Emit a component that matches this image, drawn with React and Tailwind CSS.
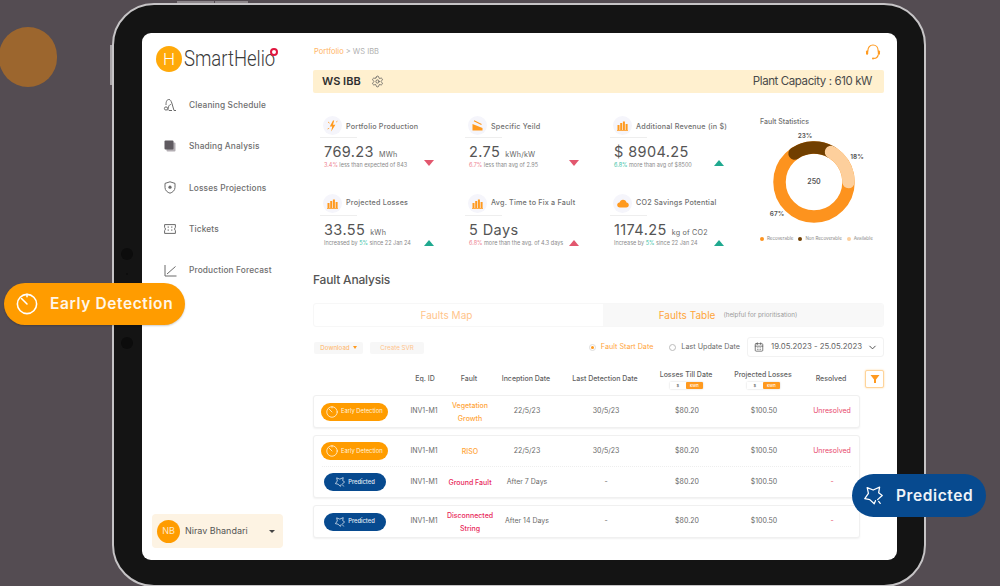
import { CalendarDays, ChevronDown, Settings } from 'lucide-react';

const navItems = [
  { name: 'Cleaning Schedule', icon: VacuumIcon },
  { name: 'Shading Analysis', icon: LayersIcon },
  { name: 'Losses Projections', icon: ShieldIcon },
  { name: 'Tickets', icon: TicketIcon },
  { name: 'Production Forecast', icon: ForecastIcon }
];

const kpis = [
  { title: 'Portfolio Production', icon: BoltIcon, value: '769.23', unit: 'MWh', pct: '3.4%', note: 'less than expected of 843', pctColor: 'text-[#ee7f90]', up: false, bad: true, top: true },
  { title: 'Specific Yeild', icon: SlopeIcon, value: '2.75', unit: 'kWh/kW', pct: '6.7%', note: 'less than avg of 2.95', pctColor: 'text-[#ee7f90]', up: false, bad: true, top: true },
  { title: 'Additional Revenue (in $)', icon: BarsIcon, value: '$ 8904.25', unit: '', pct: '6.8%', note: 'more than avg of $8500', pctColor: 'text-[#3cc3a8]', up: true, bad: false, top: true },
  { title: 'Projected Losses', icon: BarsIcon, value: '33.55', unit: 'kWh', before: 'Increased by', pct: '5%', note: 'since 22 Jan 24', pctColor: 'text-[#3cc3a8]', up: true, bad: false },
  { title: 'Avg. Time to Fix a Fault', icon: BarsIcon, value: '5 Days', unit: '', pct: '6.8%', note: 'more than the avg. of 4.3 days', pctColor: 'text-[#ee7f90]', up: true, bad: true },
  { title: 'CO2 Savings Potential', icon: CloudIcon, value: '1174.25', unit: 'kg of CO2', before: 'Increase by', pct: '5%', note: 'since 22 Jan 24', pctColor: 'text-[#3cc3a8]', up: true, bad: false }
];

const tableCols = 'grid grid-cols-[89px_42px_50px_64px_94px_68px_86px_50px] items-center text-center';

function VacuumIcon() {
  return (
    <svg width="14" height="14" viewBox="0 0 14 14" fill="none" stroke="#6b6b6b" strokeWidth="1">
      <path d="M3 7 C3 3 4 1.5 6 1.5 C7.5 1.5 8 3 8.8 5 L11 12.5 H13" />
      <path d="M5 12.5 C5 9 6 6.5 8 6.5" />
      <circle cx="3" cy="10.5" r="1.6" />
      <path d="M6 12.5 H9" />
    </svg>
  );
}

function LayersIcon() {
  return (
    <svg width="12" height="12" viewBox="0 0 12 12">
      <rect x="2.5" y="2.5" width="9" height="9" rx="1" fill="#b3aeb3" />
      <rect x="0.5" y="0.5" width="9" height="9" rx="1" fill="#5f5a60" />
    </svg>
  );
}

function ShieldIcon() {
  return (
    <svg width="12" height="13" viewBox="0 0 12 13" fill="none" stroke="#6b6b6b" strokeWidth="1">
      <path d="M6 0.8 L11 2.4 V6.5 C11 9.5 8.5 11.4 6 12.2 C3.5 11.4 1 9.5 1 6.5 V2.4 Z" />
      <circle cx="6" cy="6.2" r="1.6" fill="#6b6b6b" stroke="none" />
    </svg>
  );
}

function TicketIcon() {
  return (
    <svg width="12" height="10" viewBox="0 0 12 10" fill="none" stroke="#6b6b6b" strokeWidth="1">
      <path d="M0.6 0.6 H11.4 V3.4 C10.4 3.8 10.4 6.2 11.4 6.6 V9.4 H0.6 V6.6 C1.6 6.2 1.6 3.8 0.6 3.4 Z" />
      <path d="M4.2 2.4 V3.8 M4.2 5.4 V6.8 M7.8 2.4 V3.8 M7.8 5.4 V6.8" />
    </svg>
  );
}

function ForecastIcon() {
  return (
    <svg width="13" height="13" viewBox="0 0 13 13" fill="none" stroke="#6b6b6b" strokeWidth="1">
      <path d="M1 1 V12 H12.5" />
      <path d="M3 10 L11.5 2.5" />
    </svg>
  );
}

function BoltIcon() {
  return (
    <svg width="11" height="12" viewBox="0 0 11 12" fill="#ff9a1f">
      <path d="M6 0.5 L2.8 6.6 H5.2 L4.2 11.5 L8.4 4.8 H6 L7.2 0.5 Z" />
      <path d="M1 2 L2.6 3.2 M0.6 9 L2.2 8.2 M9.2 2 L10.4 1.2" stroke="#ff9a1f" strokeWidth="0.8" />
    </svg>
  );
}

function SlopeIcon() {
  return (
    <svg width="11" height="11" viewBox="0 0 11 11" fill="#ff9a1f">
      <path d="M0.5 4 L10.5 8 V10.5 H0.5 Z" />
      <path d="M2 0.8 L9.5 4.5" stroke="#ff9a1f" strokeWidth="1.2" />
    </svg>
  );
}

function BarsIcon() {
  return (
    <svg width="11" height="10" viewBox="0 0 11 10" fill="#ff9a1f">
      <rect x="0.5" y="4" width="2" height="5" />
      <rect x="3.2" y="2" width="2" height="7" />
      <rect x="5.9" y="0.5" width="2" height="8.5" />
      <rect x="8.6" y="3" width="2" height="6" />
      <rect x="0" y="9.2" width="11" height="0.8" />
    </svg>
  );
}

function CloudIcon() {
  return (
    <svg width="12" height="9" viewBox="0 0 12 9" fill="#ff9a1f">
      <path d="M3 8.5 C1.2 8.5 0.2 7.3 0.2 6 C0.2 4.6 1.3 3.7 2.5 3.6 C3 1.8 4.4 0.7 6 0.7 C7.9 0.7 9.2 2 9.5 3.6 C10.8 3.8 11.8 4.7 11.8 6 C11.8 7.4 10.8 8.5 9.2 8.5 Z" />
    </svg>
  );
}

function SupportIcon() {
  return (
    <svg width="16" height="16" viewBox="0 0 16 16" fill="none" stroke="#ff9a1f" strokeWidth="1.2" strokeLinecap="round">
      <path d="M2.8 7 C2.8 3.4 5 1 8 1 C11 1 13.2 3.4 13.2 7" />
      <rect x="1" y="6.4" width="2.2" height="4.4" rx="1.1" fill="#ff9a1f" stroke="none" />
      <rect x="12.8" y="6.4" width="2.2" height="4.4" rx="1.1" fill="#ff9a1f" stroke="none" />
      <path d="M13.2 10.8 C12.8 13 11 14.4 8.8 14.4" />
      <circle cx="8" cy="14.4" r="1" fill="#ff9a1f" stroke="none" />
    </svg>
  );
}

function TimerIcon({ size, stroke = 1.4 }) {
  return (
    <svg width={size} height={size} viewBox="0 0 24 24" fill="none" stroke="white" strokeWidth={stroke} strokeLinecap="round">
      <circle cx="12" cy="12" r="10.5" />
      <path d="M12 12 L6 6" />
      <path d="M12 1.5 V4" />
    </svg>
  );
}

function StarIcon({ size, stroke = 1.6 }) {
  return (
    <svg width={size} height={size} viewBox="0 0 24 24" fill="none" stroke="white" strokeWidth={stroke} strokeLinejoin="round" strokeLinecap="round">
      <path d="M17.2 17.2 L23 12 L18.5 8.6 L19.7 1.5 L11.6 5.1 L4 2 L5.6 9.4 L1 16 L7.3 17.2 L12.9 22.5 L14.5 18.5" />
      <path d="M18.5 19.5 L20.5 22" />
    </svg>
  );
}

function Triangle({ up, bad }) {
  return (
    <svg width="10" height="6" viewBox="0 0 10 6" fill={bad ? '#e2576e' : '#1fa98f'}>
      <path d={up ? 'M5 0 L10 6 H0 Z' : 'M0 0 H10 L5 6 Z'} />
    </svg>
  );
}

function KpiCard({ item }) {
  const Icon = item.icon;
  return (
    <div className="h-[78px]">
      <div className="flex items-center gap-[4px] pl-[3px] h-[19px]">
        <div className="w-[19px] h-[19px] rounded-full bg-[#f5f5fb] flex items-center justify-center">
          <Icon />
        </div>
        <span className={`text-[7.2px] font-medium text-[#6f6f6f] tracking-[0.2px] whitespace-nowrap ${item.top ? 'pt-[3px]' : ''}`}>{item.title}</span>
      </div>
      <div className="w-[37px] border-t border-[#eeeeee] mt-[2px]" />
      <div className="flex items-end w-[114px] justify-between pl-[4px] mt-[4px]">
        <div>
          <div className="flex items-baseline gap-[5px] h-[20px]">
            <span className="text-[14.5px] leading-[20px] text-[#555555] tracking-[0.4px] whitespace-nowrap">{item.value}</span>
            {item.unit && <span className="text-[7.2px] text-[#666666] tracking-[0.2px] whitespace-nowrap">{item.unit}</span>}
          </div>
          <p className="text-[5.5px] leading-[7px] text-[#8a8a8a] whitespace-nowrap">
            {item.before && `${item.before} `}
            <span className={item.pctColor}>{item.pct}</span> {item.note}
          </p>
        </div>
        <div className={item.top ? 'mb-[3px]' : 'mb-[1px]'}>
          <Triangle up={item.up} bad={item.bad} />
        </div>
      </div>
    </div>
  );
}

function Donut() {
  return (
    <svg width="110" height="100" viewBox="0 0 110 100" className="block">
      <circle cx="55" cy="50" r="34.5" fill="none" stroke="#fd931e" strokeWidth="12.5" />
      <path d="M35.6 21.5 A34.5 34.5 0 0 1 72 20" fill="none" stroke="#713f00" strokeWidth="12.5" strokeLinecap="round" />
      <path d="M72 20 A34.5 34.5 0 0 1 89.5 50" fill="none" stroke="#fdcf9c" strokeWidth="12.5" strokeLinecap="round" />
      <text x="55" y="51.5" textAnchor="middle" fontSize="7" fontWeight="600" fill="#555555">250</text>
      <text x="46" y="6" textAnchor="middle" fontSize="6.5" fontWeight="600" fill="#555555">23%</text>
      <text x="98" y="27" textAnchor="middle" fontSize="6.5" fontWeight="600" fill="#555555">18%</text>
      <text x="18" y="84" textAnchor="middle" fontSize="6.5" fontWeight="600" fill="#555555">67%</text>
    </svg>
  );
}

function LegendDot({ color, label }) {
  return (
    <div className="flex items-center gap-[3px]">
      <span className={`w-[4px] h-[4px] rounded-full ${color}`} />
      <span className="text-[4.5px] text-[#888888] whitespace-nowrap">{label}</span>
    </div>
  );
}

function UnitToggle() {
  return (
    <div className="flex justify-center mt-[2px]">
      <div className="flex h-[7px] w-[33px] rounded-[1px] shadow-[0_0_2px_rgba(0,0,0,0.2)] text-[4px] leading-[7px]">
        <span className="flex-1 bg-white text-[#666666]">$</span>
        <span className="flex-1 bg-[#ff9a1f] text-white rounded-[1px]">kWh</span>
      </div>
    </div>
  );
}

function EarlyBadge() {
  return (
    <div className="ml-[7px] w-[67px] h-[18px] rounded-full bg-[#ff9c00] flex items-center gap-[3px] pl-[5px]">
      <TimerIcon size={12} />
      <span className="text-[5.8px] text-[#fff3df] whitespace-nowrap">Early Detection</span>
    </div>
  );
}

function PredictedBadge() {
  return (
    <div className="ml-[10px] w-[62px] h-[18px] rounded-full bg-[#074a8f] flex items-center justify-center gap-[3px]">
      <StarIcon size={10} />
      <span className="text-[5.8px] font-medium text-[#e4edf6]">Predicted</span>
    </div>
  );
}

function Row({ badge, fault, faultColor, inception, last, resolved, h = 'h-[31px]' }) {
  return (
    <div className={`${tableCols} ${h} text-[7px] text-[#6a6a6a]`}>
      <div>{badge === 'early' ? <EarlyBadge /> : <PredictedBadge />}</div>
      <div className="text-[7px]">INV1-M1</div>
      <div className={`font-medium leading-[13px] text-[7px] ${faultColor}`}>{fault}</div>
      <div>{inception}</div>
      <div>{last}</div>
      <div>$80.20</div>
      <div>$100.50</div>
      <div className={resolved === '-' ? 'text-[#e8526f]' : 'text-[#e8466a]'}>{resolved}</div>
    </div>
  );
}

const cardClass = 'w-[547px] rounded-[3px] border border-[#f0f0f0] bg-white shadow-[0_1px_2px_rgba(0,0,0,0.06)]';

function Sidebar() {
  return (
    <aside className="w-[171px] h-full flex flex-col pl-[10px] pr-[30px] pb-[12px]">
      <div className="flex items-center h-[26px] mt-[13px] ml-[4px] relative">
        <div className="shrink-0 w-[26px] h-[26px] rounded-full bg-[#ffa90a] flex items-center justify-center text-[17px] font-light leading-none text-white font-['Roboto',sans-serif]">H</div>
        <span className="ml-[2px] text-[21.5px] font-light text-[#3a3a3a] leading-none font-['Roboto',sans-serif] whitespace-nowrap scale-x-[0.86] origin-left">SmartHelio</span>
        <span className="absolute left-[114px] top-[2px] w-[8px] h-[8px] rounded-full border-[2px] border-[#e0173f] bg-white" />
      </div>
      <nav className="mt-[24px] flex flex-col gap-[23.4px]">
        {navItems.map((item) => {
          const Icon = item.icon;
          return (
            <div key={item.name} className="flex items-center h-[18px] pl-[10px]">
              <div className="w-[16px] flex justify-center"><Icon /></div>
              <span className="ml-[11px] text-[8.3px] font-medium text-[#6e6e6e] tracking-[0.15px] whitespace-nowrap">{item.name}</span>
            </div>
          );
        })}
      </nav>
      <div className="mt-auto h-[34px] rounded-[4px] bg-[#fdf3e3] flex items-center pl-[5px] pr-[8px]">
        <div className="w-[23px] h-[23px] rounded-full bg-[#ff9c00] text-[#ffe9c8] text-[9px] flex items-center justify-center">NB</div>
        <span className="ml-[5px] text-[9px] text-[#555555]">Nirav Bhandari</span>
        <span className="ml-auto w-0 h-0 border-x-[3px] border-x-transparent border-t-[3px] border-t-[#444444]" />
      </div>
    </aside>
  );
}

function FaultTable() {
  return (
    <div>
      <div className="flex items-center w-[571px] mt-[11px] h-[22px]">
        <div className={`${tableCols} w-[547px] text-[7px] leading-[10px] font-medium text-[#5f5f5f]`}>
          <div />
          <div className="pl-[4px]">Eq. ID</div>
          <div>Fault</div>
          <div>Inception Date</div>
          <div>Last Detection Date</div>
          <div>
            Losses Till Date
            <UnitToggle />
          </div>
          <div>
            Projected Losses
            <UnitToggle />
          </div>
          <div>Resolved</div>
        </div>
        <div className="ml-auto w-[19px] h-[18px] rounded-[2px] border border-[#fed49a] bg-white flex items-center justify-center shadow-[0_0_2px_rgba(255,156,0,0.4)]">
          <svg width="10" height="10" viewBox="0 0 10 10" fill="#ff9a1f"><path d="M0.5 1 H9.5 L6 5.4 V9 H4 V5.4 Z" /></svg>
        </div>
      </div>
      <div className="flex flex-col gap-[7px] mt-[5px]">
        <div className={cardClass}>
          <Row badge="early" fault={<>Vegetation<br />Growth</>} faultColor="text-[#ffa53a]" inception="22/5/23" last="30/5/23" resolved="Unresolved" />
        </div>
        <div className={cardClass}>
          <Row badge="early" fault="RISO" faultColor="text-[#ffa53a]" inception="22/5/23" last="30/5/23" resolved="Unresolved" h="h-[30px]" />
          <div className="mx-[8px] border-t border-dotted border-[#eeeeee]" />
          <Row badge="predicted" fault="Ground Fault" faultColor="text-[#e8285a]" inception="After 7 Days" last="-" resolved="-" h="h-[30px]" />
        </div>
        <div className={cardClass}>
          <Row badge="predicted" fault={<>Disconnected<br />String</>} faultColor="text-[#e8285a]" inception="After 14 Days" last="-" resolved="-" />
        </div>
      </div>
    </div>
  );
}

function Main() {
  return (
    <main className="w-[571px] h-full">
      <div className="h-[37px] flex items-center justify-between pl-[1px] pr-[3px]">
        <p className="text-[7.5px] text-[#b0b0b0]"><span className="text-[#ffb463]">Portfolio</span> &gt; WS IBB</p>
        <SupportIcon />
      </div>
      <div className="h-[23px] rounded-[2px] bg-[#fff0cf] flex items-center justify-between pl-[9px] pr-[12px]">
        <div className="flex items-center gap-[10px]">
          <span className="text-[11px] font-semibold text-[#2f2f2f]">WS IBB</span>
          <Settings size={13} strokeWidth={1.4} className="text-[#555555]" />
        </div>
        <span className="text-[11.5px] text-[#4a4a4a] tracking-[-0.4px]">Plant Capacity : 610 kW</span>
      </div>

      <div className="flex mt-[23px] h-[153px]">
        <div className="grid grid-cols-3 w-[442px] pl-[7px] content-start">
          {kpis.map((item) => <KpiCard key={item.title} item={item} />)}
        </div>
        <div className="ml-[5px]">
          <p className="text-[7px] font-medium text-[#6f6f6f] mt-[1px]">Fault Statistics</p>
          <div className="-ml-[1px] mt-[4px]"><Donut /></div>
          <div className="flex gap-[5px] mt-[4px]">
            <LegendDot color="bg-[#fd931e]" label="Recoverable" />
            <LegendDot color="bg-[#713f00]" label="Non Recoverable" />
            <LegendDot color="bg-[#fdcf9c]" label="Available" />
          </div>
        </div>
      </div>

      <h2 className="text-[12px] font-medium text-[#555555] leading-[16px] tracking-[-0.2px] mt-[3px]">Fault Analysis</h2>
      <div className="flex h-[24px] mt-[15px] rounded-[3px] overflow-hidden border border-[#f7f7f7] text-[10px]">
        <div className="w-[289px] flex items-center justify-center pr-[24px] text-[#ffc48a]">Faults Map</div>
        <div className="flex-1 bg-[#f8f8f8] flex items-center justify-center gap-[8px] pr-[30px] text-[#ffa53a]">
          <span>Faults Table</span>
          <span className="text-[6.3px] pt-[2px] text-[#9a9a9a]">(helpful for prioritisation)</span>
        </div>
      </div>

      <div className="flex items-center h-[20px] mt-[10px]">
        <div className="w-[49px] h-[12px] ml-[1px] mt-[1px] rounded-[2px] bg-[#f7f7f7] flex items-center justify-center gap-[3px] text-[6.2px] text-[#ffb463]">
          Download
          <span className="w-0 h-0 border-x-[2.5px] border-x-transparent border-t-[3px] border-t-[#ff9a1f]" />
        </div>
        <div className="w-[54px] h-[12px] ml-[7px] mt-[1px] rounded-[2px] bg-[#f7f7f7] flex items-center justify-center text-[6.2px] text-[#ffc48a]">Create SVR</div>
        <div className="ml-auto flex items-center gap-[5px]">
          <span className="w-[7px] h-[7px] rounded-full border border-[#dddddd] flex items-center justify-center">
            <span className="w-[3px] h-[3px] rounded-full bg-[#ff9a1f]" />
          </span>
          <span className="text-[7.2px] text-[#ffa53a]">Fault Start Date</span>
          <span className="w-[7px] h-[7px] rounded-full border border-[#bbbbbb] ml-[11px]" />
          <span className="text-[7.2px] text-[#6a6a6a]">Last Update Date</span>
          <div className="ml-[2px] w-[137px] h-[20px] rounded-[3px] border border-[#f2f2f2] flex items-center pl-[6px] pr-[5px] text-[7.8px] text-[#666666]">
            <CalendarDays size={10} strokeWidth={1.8} className="text-[#555555]" />
            <span className="ml-[7px]">19.05.2023 - 25.05.2023</span>
            <ChevronDown size={11} strokeWidth={2} className="ml-auto text-[#444444]" />
          </div>
        </div>
      </div>

      <FaultTable />
    </main>
  );
}

export default function App() {
  return (
    <div className="w-[1000px] h-[586px] relative overflow-hidden bg-[#544c52] font-['Inter',sans-serif]">
      {/* backdrop blob */}
      <div className="absolute left-[-1px] top-[27px] w-[58px] h-[60px] rounded-full bg-[#9c662e]" />

      {/* tablet */}
      <div className="relative ml-[112px] mt-[3px] inline-block align-top">
        <span className="absolute left-[65px] top-[-2px] w-[37px] h-[2px] bg-[#8d878b]" />
        <span className="absolute left-[103px] top-[-2px] w-[33px] h-[2px] bg-[#8d878b]" />
        <span className="absolute left-[-2px] top-[42px] w-[2px] h-[40px] bg-[#a9a5a8]" />
        <div className="w-[814px] h-[584px] rounded-[42px] border-[2px] border-[#c6c4c6] bg-[#141414] pl-[28px] pt-[28px] relative">
          <span className="absolute left-[7px] top-[243px] w-[12px] h-[12px] rounded-full bg-[#0c0c0c]" />
          <span className="absolute left-[12px] top-[268px] w-[2px] h-[2px] rounded-full bg-[#0c0c0c]" />
          <span className="absolute left-[7px] top-[332px] w-[12px] h-[12px] rounded-full bg-[#0c0c0c]" />
          <div className="w-[755px] h-[527px] rounded-[9px] bg-white flex overflow-hidden">
            <Sidebar />
            <Main />
          </div>
        </div>
      </div>

      {/* callouts */}
      <div className="absolute left-[4px] top-[283px] w-[181px] h-[42px] rounded-full bg-[#ff9c00] flex items-center pl-[12px] gap-[12px] shadow-[0_1px_2px_rgba(0,0,0,0.2)]">
        <TimerIcon size={22} stroke={1.7} />
        <span className="text-[15.5px] font-semibold text-[#fff6e8] tracking-[0.6px]">Early Detection</span>
      </div>
      <div className="absolute left-[852px] top-[474px] w-[134px] h-[43px] rounded-full bg-[#074a8f] flex items-center pl-[12px] gap-[13px]">
        <StarIcon size={19} />
        <span className="text-[15.5px] font-semibold text-[#eef3f8] tracking-[0.6px]">Predicted</span>
      </div>
    </div>
  );
}
